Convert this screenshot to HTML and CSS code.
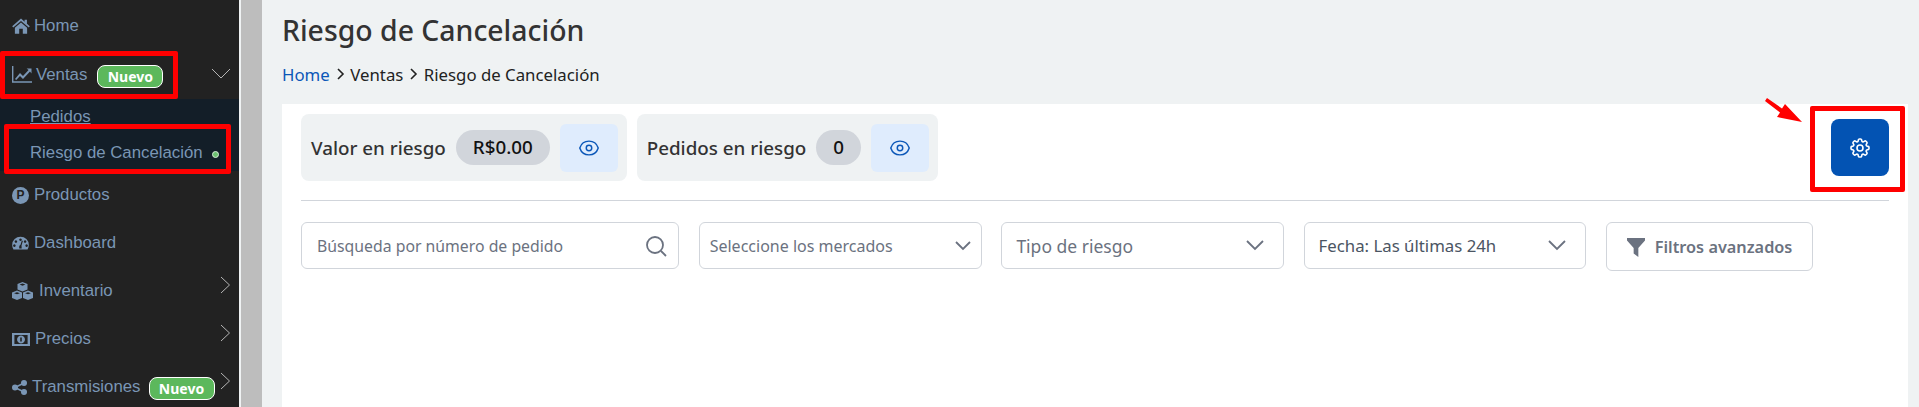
FILE: index.html
```html
<!DOCTYPE html>
<html lang="es">
<head>
    <meta charset="UTF-8">
    <title>Riesgo de Cancelación</title>
    <link rel="stylesheet" href="styles.css">
</head>
<body>
    <div class="page">
        <aside class="sidebar">
            <a class="nav-item" style="--gap:4px">
                <svg class="nav-icon" width="18" height="18" viewBox="0 0 20 18"><path d="M10 .6 L14 4.2 V2 H16.6 V6.5 L19.8 9.4 L18.6 10.8 L10 3.4 L1.4 10.8 L.2 9.4 Z M3.2 11 L10 5 L16.8 11 V17.6 H12 V12 H8 V17.6 H3.2 Z"/></svg>
                <span>Home</span>
            </a>
            <a class="nav-item" style="--gap:4px">
                <svg class="nav-icon nav-chart" width="20" height="17" viewBox="0 0 20 17"><path d="M.7 0 V16 H20" fill="none" stroke-width="1.4"/><path d="M3 13 L8 7 L11 10 L16.6 4 L14.6 2.5 H19.5 V7.4 L18 5.6 L11 13 L8 10 L4.2 14 Z" stroke="none"/></svg>
                <span>Ventas</span>
                <span class="badge badge-ventas">Nuevo</span>
                <svg class="caret caret-down" width="20" height="12" viewBox="0 0 20 12"><path d="M1 1 L10 10 L19 1"/></svg>
            </a>
            <div class="submenu">
                <a class="sub-item sub-active">Pedidos</a>
                <a class="sub-item">Riesgo de Cancelación <i class="dot"></i></a>
            </div>
            <a class="nav-item" style="--gap:1px">
                <span class="p-icon">P</span>
                <span>Productos</span>
            </a>
            <a class="nav-item" style="--gap:5px">
                <svg class="nav-icon" width="17" height="14" viewBox="0 0 20 16"><path fill-rule="evenodd" d="M10 .5 A9.8 9.8 0 0 1 19.8 10.3 C19.8 12.2 19.3 14 18.3 15.5 H1.7 C.7 14 .2 12.2 .2 10.3 A9.8 9.8 0 0 1 10 .5 Z M10 2.6 a1.5 1.5 0 1 0 .01 0 Z M4.6 4.8 a1.5 1.5 0 1 0 .01 0 Z M15.4 4.8 a1.5 1.5 0 1 0 .01 0 Z M2.8 9.6 a1.5 1.5 0 1 0 .01 0 Z M17.2 9.6 a1.5 1.5 0 1 0 .01 0 Z M8.6 14.4 H11.4 L11.2 11 L12.8 5.6 L11.6 5.2 L9.9 10.4 C8.8 10.6 8.2 12 8.6 14.4 Z"/></svg>
                <span>Dashboard</span>
            </a>
            <a class="nav-item" style="--gap:6px">
                <svg class="nav-icon" width="21" height="18" viewBox="0 0 21 18"><path fill-rule="evenodd" d="M10.5 0 L15.5 2 V7.4 L10.5 9.4 L5.5 7.4 V2 Z M7.6 2.6 L10.5 3.7 L13.4 2.6 L10.5 1.6 Z M5 8.6 L10 10.6 V16 L5 18 L0 16 V10.6 Z M2.1 11.2 L5 12.3 L7.9 11.2 L5 10.2 Z M16 8.6 L21 10.6 V16 L16 18 L11 16 V10.6 Z M13.1 11.2 L16 12.3 L18.9 11.2 L16 10.2 Z"/></svg>
                <span>Inventario</span>
                <svg class="caret caret-side" width="11" height="18" viewBox="0 0 11 18"><path d="M1 1 L9.5 9 L1 17"/></svg>
            </a>
            <a class="nav-item" style="--gap:5px">
                <svg class="nav-icon" width="18" height="13" viewBox="0 0 18 13"><path fill-rule="evenodd" d="M0 0 H18 V13 H0 Z M2.4 2 V11 H15.6 V2 Z M9 2.6 a3.9 3.9 0 1 0 .01 0 Z"/><path d="M8.2 4.6 H9.8 V8.6 H8.2 Z" fill="#222222"/></svg>
                <span>Precios</span>
                <svg class="caret caret-side" width="11" height="18" viewBox="0 0 11 18"><path d="M1 1 L9.5 9 L1 17"/></svg>
            </a>
            <a class="nav-item" style="--gap:5px">
                <svg class="nav-icon" width="15" height="15" viewBox="0 0 15 15"><circle cx="3" cy="7.5" r="3"/><circle cx="12" cy="3" r="3"/><circle cx="12" cy="12" r="3"/><path d="M3 7.5 L12 3 M3 7.5 L12 12" stroke-width="1.6"/></svg>
                <span>Transmisiones</span>
                <span class="badge badge-trans">Nuevo</span>
                <svg class="caret caret-side" width="11" height="18" viewBox="0 0 11 18"><path d="M1 1 L9.5 9 L1 17"/></svg>
            </a>
        </aside>

        <div class="gutter"></div>

        <main class="content">
            <h1>Riesgo de Cancelación</h1>
            <nav class="breadcrumb">
                <a>Home</a>
                <svg width="9" height="12" viewBox="0 0 9 12"><path d="M2 1 L7 6 L2 11"/></svg>
                <span>Ventas</span>
                <svg width="9" height="12" viewBox="0 0 9 12"><path d="M2 1 L7 6 L2 11"/></svg>
                <span>Riesgo de Cancelación</span>
            </nav>

            <section class="panel">
                <div class="top-row">
                    <div class="stats">
                        <div class="stat">
                            <span>Valor en riesgo</span>
                            <span class="pill">R$0.00</span>
                            <button class="eye-btn">
                                <svg width="22" height="22" viewBox="0 0 24 24"><path d="M2.036 12.322a1.012 1.012 0 010-.639C3.423 7.51 7.36 4.5 12 4.5c4.638 0 8.573 3.007 9.963 7.178.07.207.07.431 0 .639C20.577 16.49 16.64 19.5 12 19.5c-4.638 0-8.573-3.007-9.963-7.178z"/><circle cx="12" cy="12" r="3"/></svg>
                            </button>
                        </div>
                        <div class="stat">
                            <span>Pedidos en riesgo</span>
                            <span class="pill pill-count">0</span>
                            <button class="eye-btn">
                                <svg width="22" height="22" viewBox="0 0 24 24"><path d="M2.036 12.322a1.012 1.012 0 010-.639C3.423 7.51 7.36 4.5 12 4.5c4.638 0 8.573 3.007 9.963 7.178.07.207.07.431 0 .639C20.577 16.49 16.64 19.5 12 19.5c-4.638 0-8.573-3.007-9.963-7.178z"/><circle cx="12" cy="12" r="3"/></svg>
                            </button>
                        </div>
                    </div>
                    <button class="gear-btn">
                        <svg width="24" height="24" viewBox="0 0 24 24"><path d="M10.343 3.94c.09-.542.56-.94 1.11-.94h1.093c.55 0 1.02.398 1.11.94l.149.894c.07.424.384.764.78.93.398.164.855.142 1.205-.108l.737-.527a1.125 1.125 0 011.45.12l.773.774c.39.389.44 1.002.12 1.45l-.527.737c-.25.35-.272.806-.107 1.204.165.397.505.71.93.78l.893.15c.543.09.94.56.94 1.109v1.094c0 .55-.397 1.02-.94 1.11l-.893.149c-.425.07-.765.383-.93.78-.165.398-.143.854.107 1.204l.527.738c.32.447.269 1.06-.12 1.45l-.774.773a1.125 1.125 0 01-1.449.12l-.738-.527c-.35-.25-.806-.272-1.203-.107-.397.165-.71.505-.781.929l-.149.894c-.09.542-.56.94-1.11.94h-1.094c-.55 0-1.019-.398-1.11-.94l-.148-.894c-.071-.424-.384-.764-.781-.93-.398-.164-.854-.142-1.204.108l-.738.527c-.447.32-1.06.269-1.45-.12l-.773-.774a1.125 1.125 0 01-.12-1.45l.527-.737c.25-.35.273-.806.108-1.204-.165-.397-.505-.71-.93-.78l-.894-.15c-.542-.09-.94-.56-.94-1.109v-1.094c0-.55.398-1.02.94-1.11l.894-.149c.424-.07.765-.383.93-.78.165-.398.143-.854-.107-1.204l-.527-.738a1.125 1.125 0 01.12-1.45l.773-.773a1.125 1.125 0 011.45-.12l.737.527c.35.25.807.272 1.204.107.397-.165.71-.505.78-.929l.15-.894z"/><circle cx="12" cy="12" r="3"/></svg>
                    </button>
                </div>

                <hr class="divider">

                <div class="filters">
                    <div class="field field-search">
                        <span class="placeholder">Búsqueda por número de pedido</span>
                        <svg width="22" height="22" viewBox="0 0 22 22"><circle cx="10" cy="10" r="8"/><path d="M16 16 L21 21"/></svg>
                    </div>
                    <div class="field field-market">
                        <span class="placeholder">Seleccione los mercados</span>
                        <svg width="16" height="10" viewBox="0 0 16 10"><path d="M1 1 L8 8 L15 1"/></svg>
                    </div>
                    <div class="field field-select">
                        <span class="placeholder placeholder-wide">Tipo de riesgo</span>
                        <svg width="18" height="11" viewBox="0 0 18 11"><path d="M1 1 L9 9 L17 1"/></svg>
                    </div>
                    <div class="field field-select">
                        <span class="value">Fecha: Las últimas 24h</span>
                        <svg width="18" height="11" viewBox="0 0 18 11"><path d="M1 1 L9 9 L17 1"/></svg>
                    </div>
                    <button class="filter-btn">
                        <svg width="18" height="20" viewBox="0 0 20 20" preserveAspectRatio="none"><path d="M0 1 H20 V3.5 L12.6 11 V20 L7.4 16.5 V11 L0 3.5 Z"/></svg>
                        Filtros avanzados
                    </button>
                </div>
            </section>
        </main>

        <!-- marcas rojas sobre la captura -->
        <div class="mark mark-ventas"></div>
        <div class="mark mark-riesgo"></div>
        <div class="mark mark-gear"></div>
        <svg class="mark-arrow" width="42" height="28" viewBox="0 0 42 28"><path d="M1 3 L3 0 L18 10.5 L21 6 L38 24 L13 19 L16 14.5 Z"/></svg>
    </div>
</body>
</html>
```

FILE: styles.css
```css
html, body {
    margin: 0;
    height: 407px;
    overflow: hidden;
}

body {
    font-family: "Noto Sans", sans-serif;
    background-color: #eff2f3;
}

.page {
    position: relative;
    display: flex;
    height: 407px;
    overflow: hidden;
    background-color: #eff2f3;
}

/* sidebar */
.sidebar {
    width: 239px;
    flex-shrink: 0;
    background-color: #222222;
    font-family: "Liberation Sans", Arial, sans-serif;
    font-size: 16.8px;
    color: #7a96b5;
}

.nav-item {
    display: flex;
    align-items: center;
    gap: var(--gap);
    height: 48px;
    padding-left: 12px;
    position: relative;
}

.nav-item:first-child { height: 51px; }

.nav-icon {
    fill: #7a96b5;
    stroke: #7a96b5;
    stroke-width: 0;
    flex-shrink: 0;
}

.nav-chart { margin-top: -2px; }

.p-icon {
    width: 17px;
    height: 17px;
    margin-right: 4px;
    border-radius: 50%;
    background-color: #7a96b5;
    color: #222222;
    font-size: 12px;
    font-weight: bold;
    line-height: 17px;
    text-align: center;
}

.badge {
    display: inline-block;
    box-sizing: border-box;
    width: 66px;
    height: 23px;
    border: 1px solid #ffffff;
    border-radius: 8px;
    background-color: #5cb85c;
    color: #ffffff;
    font-family: "Noto Sans", sans-serif;
    font-size: 14px;
    font-weight: bold;
    line-height: 22px;
    text-align: center;
}

.badge-ventas { margin-left: 6px; margin-top: 2px; }
.badge-trans { margin-left: 3px; margin-top: 3px; }

.caret {
    fill: none;
    stroke: #b5b5b5;
    stroke-width: 1;
    position: absolute;
    right: 8px;
}

.caret-down { top: 17px; }
.caret-side { top: 9px; }

.submenu {
    height: 72px;
    background-color: #131e28;
}

.sub-item {
    display: block;
    height: 36px;
    padding-left: 30px;
    line-height: 36px;
}

.sub-active {
    text-decoration: underline;
}

.dot {
    display: inline-block;
    width: 7px;
    height: 7px;
    margin-left: 5px;
    border-radius: 50%;
    background-color: #6cc070;
    border: 1px solid #d8ecd8;
    box-sizing: border-box;
}

.gutter {
    width: 21px;
    flex-shrink: 0;
    margin-left: 2px;
    background-color: #bdbdbd;
}

/* content */
.content {
    flex: 1;
    min-width: 0;
    padding: 0 11px 0 20px;
}

h1 {
    margin: 0;
    padding-top: 10px;
    height: 43px;
    font-size: 28.4px;
    font-weight: 500;
    line-height: 40px;
    color: #333333;
}

.breadcrumb {
    display: flex;
    align-items: center;
    gap: 5.75px;
    height: 34px;
    margin-top: 4px;
    font-size: 16.8px;
    color: #222222;
}

.breadcrumb a { color: #0b57b8; }

.breadcrumb svg {
    fill: none;
    stroke: #222222;
    stroke-width: 1.6;
}

.panel {
    box-sizing: border-box;
    height: 303px;
    margin-top: 13px;
    padding: 10px 19px;
    background-color: #ffffff;
}

.top-row {
    display: flex;
    justify-content: space-between;
    align-items: flex-start;
}

.stats {
    display: flex;
    gap: 10px;
}

.stat {
    display: flex;
    align-items: center;
    height: 67px;
    padding: 0 9px 0 10px;
    box-sizing: border-box;
    border-radius: 8px;
    background-color: #eff2f3;
    font-size: 18.8px;
    font-weight: 500;
    color: #333333;
}

.pill {
    margin-left: 10px;
    padding: 0 17px;
    height: 35px;
    border-radius: 18px;
    background-color: #d1d5db;
    color: #111111;
    line-height: 35px;
}

.eye-btn {
    display: flex;
    align-items: center;
    justify-content: center;
    width: 58px;
    height: 48px;
    margin-left: 10px;
    padding: 0;
    border: 0;
    border-radius: 6px;
    background-color: #dfecfd;
}

.eye-btn svg {
    fill: none;
    stroke: #0b57b8;
    stroke-width: 1.6;
}

.gear-btn {
    display: flex;
    align-items: center;
    justify-content: center;
    width: 58px;
    height: 57px;
    margin-top: 5px;
    padding: 0;
    border: 0;
    border-radius: 8px;
    background-color: #0353b3;
}

.gear-btn svg {
    fill: none;
    stroke: #ffffff;
    stroke-width: 1.6;
}

.divider {
    height: 1px;
    margin: 19px 0 21px;
    border: 0;
    background-color: #d1d5db;
}

.filters {
    display: grid;
    grid-template-columns: 378px 283px 282.5px 282.5px 207px;
    column-gap: 19.7px;
    align-items: start;
}

.field {
    display: flex;
    align-items: center;
    justify-content: space-between;
    box-sizing: border-box;
    height: 47px;
    padding: 0 19px 0 14px;
    border: 1px solid #d1d5db;
    border-radius: 6px;
    font-size: 16.8px;
}

.field svg {
    fill: none;
    stroke: #6b7280;
    stroke-width: 1.8;
}

.field-search { padding: 0 11px 0 15px; font-size: 15.8px; }
.field-market { padding: 0 10px; font-size: 16px; }

.placeholder { color: #6b7280; }
.placeholder-wide { font-size: 17.5px; }
.value { color: #4b5563; }

.filter-btn {
    display: flex;
    align-items: center;
    gap: 10px;
    box-sizing: border-box;
    height: 49px;
    padding: 0 0 0 20px;
    border: 1px solid #d1d5db;
    border-radius: 6px;
    background-color: #ffffff;
    font-family: "Noto Sans", sans-serif;
    font-size: 16.3px;
    font-weight: 600;
    color: #6b7280;
    white-space: nowrap;
}

.filter-btn svg { fill: #6b7280; }

/* annotations */
.mark {
    position: absolute;
    box-sizing: border-box;
    border: 5px solid #ff0000;
    border-radius: 2px;
}

.mark-ventas { left: 0; top: 51px; width: 178px; height: 48px; }
.mark-riesgo { left: 4px; top: 124px; width: 227px; height: 50px; }
.mark-gear { left: 1810px; top: 106px; width: 95px; height: 86px; }

.mark-arrow {
    position: absolute;
    left: 1764px;
    top: 98px;
    fill: #ff0000;
}
```
